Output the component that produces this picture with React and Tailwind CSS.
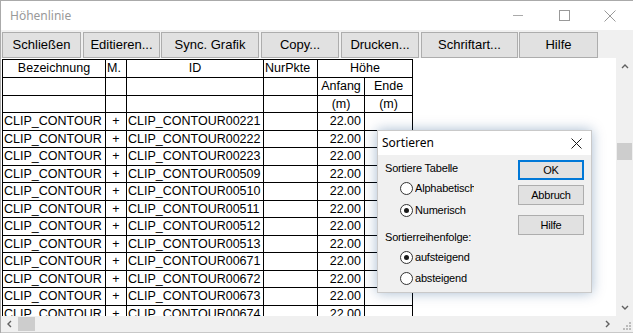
import React from "react";

const ids = ["00221", "00222", "00223", "00509", "00510", "00511", "00512", "00513", "00671", "00672", "00673", "00674"];
// line-to-line heights of the table rows (header rows first)
const heights = [18, 18, 17, 18, 17, 18, 17, 18, 17, 18, 17, 18, 17, 18, 17];

const tableFont = { fontFamily: '"Liberation Sans", Arial, sans-serif' };

function Row({ h, children }) {
  return (
    <div className={`flex border-b border-black ${h === 18 ? "h-[18px]" : "h-[17px]"}`}>
      {children}
    </div>
  );
}

function ToolButton({ label, className }) {
  return (
    <button
      className={`h-[26px] border border-[#adadad] bg-[#e1e1e1] text-[13px] text-black flex items-center justify-center ${className}`}
    >
      {label}
    </button>
  );
}

function Radio({ checked, label, clip }) {
  return (
    <div className="flex items-center h-[14px] pl-[15px]">
      <span className="w-[13px] h-[13px] shrink-0 rounded-full border border-[#333] bg-white flex items-center justify-center">
        {checked && <span className="w-[5px] h-[5px] rounded-full bg-[#1a1a1a]" />}
      </span>
      <span className={`ml-[2px] whitespace-nowrap ${clip ? "w-[59px] overflow-hidden" : ""}`}>{label}</span>
    </div>
  );
}

function DialogButton({ label, focused, className }) {
  return (
    <button
      className={`w-[66px] h-[20px] bg-[#e1e1e1] flex items-center justify-center text-[11px] text-black ${
        focused ? "border-2 border-[#0078d7]" : "border border-[#adadad]"
      } ${className}`}
    >
      {label}
    </button>
  );
}

function Chevron({ dir }) {
  const d = {
    up: "M1 5 L4 2 L7 5",
    down: "M1 2 L4 5 L7 2",
    left: "M5 1 L2 4 L5 7",
    right: "M2 1 L5 4 L2 7",
  }[dir];
  return (
    <svg width="8" height="8" viewBox="0 0 8 8">
      <path d={d} fill="none" stroke="#606060" strokeWidth="1.4" />
    </svg>
  );
}

export default function App() {
  return (
    <div
      className="relative w-[633px] h-[333px] flex flex-col bg-white border-t border-l border-[#aaaaaa] overflow-hidden"
      style={tableFont}
    >
      {/* title bar */}
      <div className="h-[29px] shrink-0 flex items-center bg-white">
        <span className="ml-[9px] text-[12px] text-[#999999]" style={{ fontFamily: '"Noto Sans", sans-serif' }}>
          Höhenlinie
        </span>
        <div className="ml-auto flex items-center h-full">
          <div className="w-[46px] flex justify-center">
            <span className="w-[10px] h-px bg-[#aaaaaa]" />
          </div>
          <div className="w-[46px] flex justify-center">
            <span className="w-[11px] h-[11px] border border-[#999999]" />
          </div>
          <div className="w-[46px] flex justify-center">
            <svg width="12" height="12" viewBox="0 0 12 12">
              <path d="M0.5 0.5 L11.5 11.5 M11.5 0.5 L0.5 11.5" stroke="#999999" strokeWidth="1" />
            </svg>
          </div>
        </div>
      </div>

      {/* toolbar */}
      <div className="h-[28px] shrink-0 bg-[#f0f0f0] flex pt-[2px] pl-[1px]">
        <ToolButton label="Schließen" className="w-[79px]" />
        <ToolButton label="Editieren..." className="w-[77px] ml-[2px]" />
        <ToolButton label="Sync. Grafik" className="w-[98px] ml-[1px]" />
        <ToolButton label="Copy..." className="w-[78px] ml-[2px]" />
        <ToolButton label="Drucken..." className="w-[78px] ml-[2px]" />
        <ToolButton label="Schriftart..." className="w-[97px] ml-[2px]" />
        <ToolButton label="Hilfe" className="w-[79px] ml-[1px]" />
      </div>

      {/* content + vertical scrollbar */}
      <div className="flex flex-1 min-h-0">
        <div className="flex-1 overflow-hidden bg-white pt-px pl-[1px]">
          <div className="w-[411px] border-t border-l border-black text-[12.5px] text-black">
            <Row h={heights[0]}>
              <div className="w-[103px] flex items-center justify-center border-r border-black">Bezeichnung</div>
              <div className="w-[21px] flex items-center pl-[1px] border-r border-black">M.</div>
              <div className="w-[137px] flex items-center justify-center border-r border-black">ID</div>
              <div className="w-[54px] flex items-center pl-[1px] border-r border-black">NurPkte</div>
              <div className="w-[95px] flex items-center justify-center border-r border-black">Höhe</div>
            </Row>
            <Row h={heights[1]}>
              <div className="w-[103px] border-r border-black" />
              <div className="w-[21px] border-r border-black" />
              <div className="w-[137px] border-r border-black" />
              <div className="w-[54px] border-r border-black" />
              <div className="w-[47px] flex items-center justify-center border-r border-black">Anfang</div>
              <div className="w-[48px] flex items-center justify-center border-r border-black">Ende</div>
            </Row>
            <Row h={heights[2]}>
              <div className="w-[103px] border-r border-black" />
              <div className="w-[21px] border-r border-black" />
              <div className="w-[137px] border-r border-black" />
              <div className="w-[54px] border-r border-black" />
              <div className="w-[47px] flex items-center justify-center border-r border-black">(m)</div>
              <div className="w-[48px] flex items-center justify-center border-r border-black">(m)</div>
            </Row>
            {ids.map((id, i) => (
              <Row key={id} h={heights[i + 3]}>
                <div className="w-[103px] flex items-center pl-[1px] border-r border-black">CLIP_CONTOUR</div>
                <div className="w-[21px] flex items-center justify-center border-r border-black">+</div>
                <div className="w-[137px] flex items-center pl-[1px] border-r border-black">CLIP_CONTOUR{id}</div>
                <div className="w-[54px] border-r border-black" />
                <div className="w-[47px] flex items-center justify-end pr-[3px] border-r border-black">22.00</div>
                <div className="w-[48px] border-r border-black" />
              </Row>
            ))}
          </div>
        </div>

        {/* vertical scrollbar */}
        <div className="w-[17px] shrink-0 bg-[#f0f0f0] flex flex-col">
          <div className="h-[17px] flex items-center justify-center">
            <Chevron dir="up" />
          </div>
          <div className="flex-1">
            <div className="mt-[68px] mx-px h-[17px] bg-[#cdcdcd]" />
          </div>
          <div className="h-[17px] flex items-center justify-center">
            <Chevron dir="down" />
          </div>
        </div>
      </div>

      {/* horizontal scrollbar */}
      <div className="h-[17px] shrink-0 flex bg-[#f0f0f0] border-b border-[#c8c8c8]">
        <div className="flex-1 flex items-center">
          <div className="w-[17px] flex justify-center">
            <Chevron dir="left" />
          </div>
          <div className="w-[17px] h-[14px] bg-[#cdcdcd]" />
          <div className="flex-1" />
          <div className="w-[17px] flex justify-center">
            <Chevron dir="right" />
          </div>
        </div>
        <div className="w-[17px] relative">
          <svg className="absolute right-[2px] bottom-[2px]" width="10" height="10" viewBox="0 0 10 10">
            <g fill="#bcbcbc">
              <rect x="8" y="2" width="2" height="2" />
              <rect x="5" y="5" width="2" height="2" />
              <rect x="8" y="5" width="2" height="2" />
              <rect x="2" y="8" width="2" height="2" />
              <rect x="5" y="8" width="2" height="2" />
              <rect x="8" y="8" width="2" height="2" />
            </g>
          </svg>
        </div>
      </div>

      {/* Sortieren dialog */}
      <div className="absolute left-[376px] top-[129px] w-[215px] h-[163px] flex flex-col bg-[#f0f0f0] border border-[#c9c9c9] shadow-[0_0_12px_rgba(0,60,120,0.35)]">
        <div className="h-[24px] shrink-0 bg-white flex items-center">
          <span className="ml-[4px] text-[12px] text-black" style={{ fontFamily: '"Noto Sans", sans-serif' }}>
            Sortieren
          </span>
          <svg className="ml-auto mr-[9px]" width="11" height="11" viewBox="0 0 11 11">
            <path d="M0.5 0.5 L10.5 10.5 M10.5 0.5 L0.5 10.5" stroke="#1a1a1a" strokeWidth="1" />
          </svg>
        </div>
        <div className="flex flex-1 text-[11px] text-black tracking-[-0.2px]">
          <div className="w-[140px] pl-[7px]">
            <div className="mt-[6px] h-[14px] flex items-center">Sortiere Tabelle</div>
            <div className="mt-[6px]">
              <Radio label="Alphabetisch" clip />
            </div>
            <div className="mt-[8px]">
              <Radio label="Numerisch" checked />
            </div>
            <div className="mt-[13px] h-[14px] flex items-center">Sortierreihenfolge:</div>
            <div className="mt-[6px]">
              <Radio label="aufsteigend" checked />
            </div>
            <div className="mt-[7px]">
              <Radio label="absteigend" />
            </div>
          </div>
          <div className="flex flex-col pt-[5px]">
            <DialogButton label="OK" focused />
            <DialogButton label="Abbruch" className="mt-[5px]" />
            <DialogButton label="Hilfe" className="mt-[10px]" />
          </div>
        </div>
      </div>
    </div>
  );
}
